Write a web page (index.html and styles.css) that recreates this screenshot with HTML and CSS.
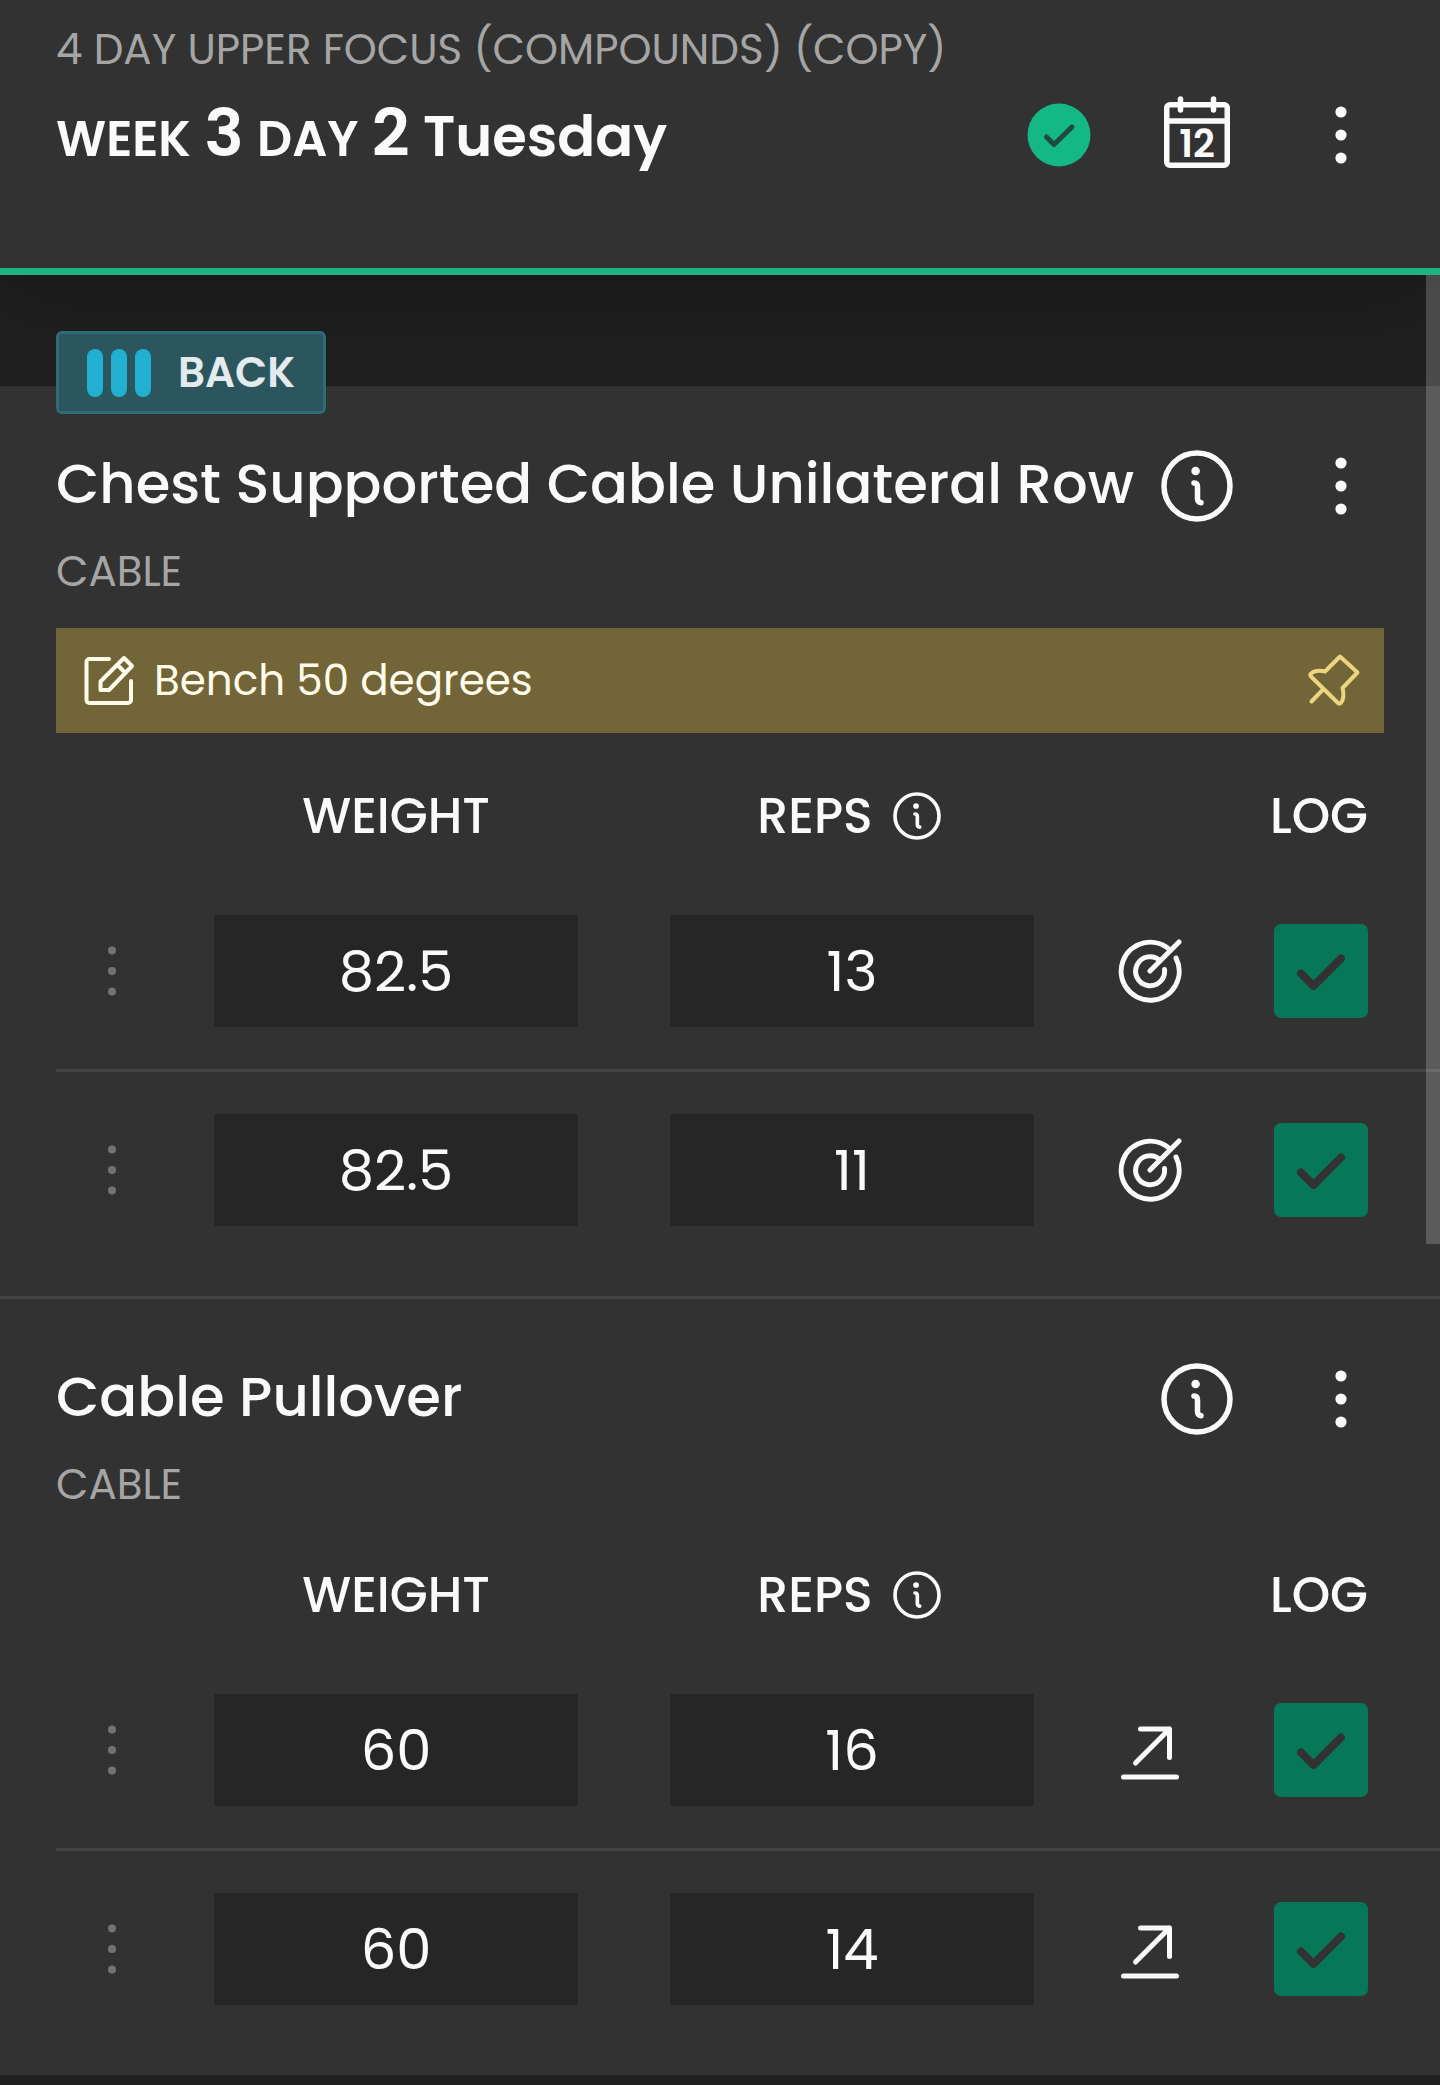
FILE: index.html
```html
<!DOCTYPE html>
<html lang="en">
<head>
<meta charset="utf-8">
<meta name="viewport" content="width=device-width, initial-scale=1">
<title>Week 3 Day 2 Tuesday</title>
<link rel="stylesheet" href="styles.css">
</head>
<body>
<svg class="sprite" aria-hidden="true">
  <symbol id="info" viewBox="0 0 72 72">
    <circle cx="36" cy="36" r="33" fill="none" stroke="currentColor" stroke-width="5.5"/>
    <circle cx="34.6" cy="21" r="4.3" fill="currentColor"/>
    <path d="M33 33c2.5 0 3.5 1.5 3.5 4v11.5c0 2.5 1 4 3.5 4.2" fill="none" stroke="currentColor" stroke-width="5.5" stroke-linecap="round"/>
  </symbol>
  <symbol id="dots" viewBox="0 0 16 72">
    <circle cx="8" cy="13" r="5.6" fill="currentColor"/><circle cx="8" cy="36" r="5.6" fill="currentColor"/><circle cx="8" cy="59" r="5.6" fill="currentColor"/>
  </symbol>
  <symbol id="grip" viewBox="0 0 16 64">
    <circle cx="8" cy="11.5" r="4" fill="currentColor"/><circle cx="8" cy="32" r="4" fill="currentColor"/><circle cx="8" cy="52.5" r="4" fill="currentColor"/>
  </symbol>
  <symbol id="target" viewBox="0 0 64 64">
    <path d="M58 19A29 29 0 1 1 52.5 11.5M46.5 30.5A14.5 14.5 0 1 1 42.2 21.8M32 32 61 3" fill="none" stroke="currentColor" stroke-width="5" stroke-linecap="round"/>
  </symbol>
  <symbol id="increase" viewBox="0 0 64 64">
    <path d="M22.5 11h29v28.5M51.5 11l-34 34M5.5 59h53" fill="none" stroke="currentColor" stroke-width="5" stroke-linecap="round" stroke-linejoin="round"/>
  </symbol>
  <symbol id="tick" viewBox="0 0 94 94">
    <path d="M27 49.5 39.5 62 67 34.5" fill="none" stroke="currentColor" stroke-width="8" stroke-linecap="round" stroke-linejoin="round"/>
  </symbol>
</svg>

<header class="topbar">
  <p class="program">4 DAY UPPER FOCUS (COMPOUNDS) (COPY)</p>
  <div class="title-row">
    <h1 class="title"><span class="unit">WEEK</span> <span class="count">3</span> <span class="unit">DAY</span> <span class="count">2</span> Tuesday</h1>
    <div class="actions">
      <svg class="done" viewBox="0 0 64 64" role="img" aria-label="Completed"><circle cx="32" cy="32" r="31.5" fill="#14b884"/><path d="M19.5 34 27 41.5 45 24" fill="none" stroke="#1f4a3c" stroke-width="5" stroke-linecap="round" stroke-linejoin="round"/></svg>
      <button class="icon-button" type="button" aria-label="Calendar">
        <svg class="icon" viewBox="0 0 72 72"><rect x="5.75" y="5.75" width="60.5" height="60.5" rx="3" fill="none" stroke="currentColor" stroke-width="5.5"/><path d="M6 22h60M19.5 0v11M52.5 0v11" fill="none" stroke="currentColor" stroke-width="5.5" stroke-linecap="round"/><text class="calendar-day" x="36" y="58" text-anchor="middle">12</text></svg>
      </button>
      <button class="menu-button" type="button" aria-label="Workout menu"><svg class="dots"><use href="#dots"/></svg></button>
    </div>
  </div>
</header>

<main class="workout">
  <div class="scroll-thumb"></div>

  <section class="exercise exercise-first">
    <div class="muscle">
      <svg class="bars" viewBox="0 0 64 48" aria-hidden="true"><rect x="0" y="0" width="16" height="48" rx="8"/><rect x="24" y="0" width="16" height="48" rx="8"/><rect x="48" y="0" width="16" height="48" rx="8"/></svg>
      BACK
    </div>
    <div class="exercise-head">
      <h2 class="exercise-name">Chest Supported Cable Unilateral Row</h2>
      <button class="icon-button" type="button" aria-label="Exercise info"><svg class="icon"><use href="#info"/></svg></button>
      <button class="menu-button" type="button" aria-label="Exercise menu"><svg class="dots"><use href="#dots"/></svg></button>
    </div>
    <p class="equipment">CABLE</p>
    <div class="note">
      <svg class="note-icon" viewBox="0 0 52 52" aria-hidden="true"><path d="M26 4H6.5a3 3 0 0 0-3 3V45a3 3 0 0 0 3 3H45a3 3 0 0 0 3-3V26M41 3 49 11 26 35H17.5V26.5ZM34.5 10 42.5 18" fill="none" stroke="currentColor" stroke-width="4" stroke-linecap="round" stroke-linejoin="round"/></svg>
      <span class="note-text">Bench 50 degrees</span>
      <button class="pin" type="button" aria-label="Unpin note"><svg class="note-icon" viewBox="0 0 52 52"><path d="M32 1.5 49.5 17.5 34.5 33Q37 42 33 48Q31 49.5 29.5 47.5L3 21.5Q1.5 20 3 18.5Q8 14.5 17 16.5ZM15 34.5 3.5 46.5" fill="none" stroke="currentColor" stroke-width="4" stroke-linecap="round" stroke-linejoin="round"/></svg></button>
    </div>
    <table class="sets sets-noted">
      <thead>
        <tr><th class="col-grip"></th><th>WEIGHT</th><th><span class="reps-label">REPS <button class="reps-info" type="button" aria-label="Reps info"><svg class="icon-small"><use href="#info"/></svg></button></span></th><th class="col-goal"></th><th class="col-log">LOG</th></tr>
      </thead>
      <tbody>
        <tr>
          <td><svg class="grip"><use href="#grip"/></svg></td>
          <td><input class="value" type="text" value="82.5" aria-label="Set 1 weight"></td>
          <td><input class="value" type="text" value="13" aria-label="Set 1 reps"></td>
          <td><svg class="goal"><use href="#target"/></svg></td>
          <td class="col-log"><label class="log"><input class="log-box" type="checkbox" checked aria-label="Log set 1"><svg class="log-tick"><use href="#tick"/></svg></label></td>
        </tr>
        <tr>
          <td><svg class="grip"><use href="#grip"/></svg></td>
          <td><input class="value" type="text" value="82.5" aria-label="Set 2 weight"></td>
          <td><input class="value" type="text" value="11" aria-label="Set 2 reps"></td>
          <td><svg class="goal"><use href="#target"/></svg></td>
          <td class="col-log"><label class="log"><input class="log-box" type="checkbox" checked aria-label="Log set 2"><svg class="log-tick"><use href="#tick"/></svg></label></td>
        </tr>
      </tbody>
    </table>
  </section>

  <section class="exercise exercise-next">
    <div class="exercise-head">
      <h2 class="exercise-name">Cable Pullover</h2>
      <button class="icon-button" type="button" aria-label="Exercise info"><svg class="icon"><use href="#info"/></svg></button>
      <button class="menu-button" type="button" aria-label="Exercise menu"><svg class="dots"><use href="#dots"/></svg></button>
    </div>
    <p class="equipment">CABLE</p>
    <table class="sets">
      <thead>
        <tr><th class="col-grip"></th><th>WEIGHT</th><th><span class="reps-label">REPS <button class="reps-info" type="button" aria-label="Reps info"><svg class="icon-small"><use href="#info"/></svg></button></span></th><th class="col-goal"></th><th class="col-log">LOG</th></tr>
      </thead>
      <tbody>
        <tr>
          <td><svg class="grip"><use href="#grip"/></svg></td>
          <td><input class="value" type="text" value="60" aria-label="Set 1 weight"></td>
          <td><input class="value" type="text" value="16" aria-label="Set 1 reps"></td>
          <td><svg class="goal"><use href="#increase"/></svg></td>
          <td class="col-log"><label class="log"><input class="log-box" type="checkbox" checked aria-label="Log set 1"><svg class="log-tick"><use href="#tick"/></svg></label></td>
        </tr>
        <tr>
          <td><svg class="grip"><use href="#grip"/></svg></td>
          <td><input class="value" type="text" value="60" aria-label="Set 2 weight"></td>
          <td><input class="value" type="text" value="14" aria-label="Set 2 reps"></td>
          <td><svg class="goal"><use href="#increase"/></svg></td>
          <td class="col-log"><label class="log"><input class="log-box" type="checkbox" checked aria-label="Log set 2"><svg class="log-tick"><use href="#tick"/></svg></label></td>
        </tr>
      </tbody>
    </table>
  </section>
</main>
</body>
</html>
```
FILE: styles.css
```css
* { box-sizing: border-box; }

body {
  margin: 0;
  background: #1f1f1f;
  color: #fafafa;
  font-family: Poppins, Inter, sans-serif;
  font-size: 42px;
}

h1, h2, p { margin: 0; }
svg { display: block; overflow: visible; }
button { border: 0; padding: 0; background: none; color: inherit; font-family: inherit; cursor: pointer; }

.sprite { position: absolute; width: 0; height: 0; }

.topbar {
  position: relative;
  padding: 20px 56px 91px;
  background: #323232;
  border-bottom: 7px solid #1cb582;
  box-shadow: 0 8px 96px rgba(0, 0, 0, 0.25);
}
.program { color: #a5a5a5; line-height: 60px; }
.title-row { display: flex; align-items: center; margin-top: 13px; }
.title { flex: 1; padding-top: 4px; font-size: 56px; font-weight: 600; line-height: 80px; }
.unit, .count { line-height: 1; }
.unit { font-size: 49px; }
.count { font-size: 66px; }
.actions { display: flex; align-items: center; gap: 64px; }
.done { width: 76px; height: 64px; }

.icon-button { width: 72px; height: 72px; flex: none; }
.icon { width: 72px; height: 72px; }
.calendar-day { font-size: 38px; font-weight: 600; fill: currentColor; }
.menu-button { width: 87px; height: 84px; display: grid; place-items: center; flex: none; }
.dots { width: 16px; height: 72px; }

.workout { position: relative; padding: 111px 0 10px; }
.scroll-thumb {
  position: absolute;
  top: 0;
  right: 0;
  width: 14px;
  height: 969px;
  background: rgba(255, 255, 255, 0.2);
}

.exercise { padding-bottom: 28px; background: #323232; }
.exercise-first { display: flow-root; }
.exercise-next { padding-top: 58px; border-top: 3px solid #454545; }

.muscle {
  position: relative;
  display: flex;
  align-items: center;
  gap: 27px;
  width: fit-content;
  height: 83px;
  margin: -55px 0 30px 56px;
  padding: 0 28px;
  border: 3px solid #2f6b78;
  border-radius: 6px;
  background: #2c565e;
  color: #e4ebee;
  font-weight: 600;
}
.bars { width: 64px; height: 48px; fill: #22b0d2; }

.exercise-head { display: flex; align-items: center; gap: 64px; padding: 0 56px; }
.exercise-name { flex: 1; margin-right: -64px; padding-bottom: 4px; font-size: 56px; font-weight: 500; line-height: 80px; }
.equipment { margin: 14px 56px 0; color: #a5a5a5; line-height: 60px; }

.note {
  display: flex;
  align-items: center;
  gap: 19px;
  height: 105px;
  margin: 26px 56px 0;
  padding: 0 24px 0 27px;
  background: #726537;
  color: #fffbea;
}
.note-text { flex: 1; }
.note-icon { width: 52px; height: 52px; }
.pin { color: #ecd57f; }

.sets {
  width: calc(100% - 56px);
  margin: 21px 0 0 56px;
  table-layout: fixed;
  border-spacing: 0;
  text-align: center;
}
.sets-noted { margin-top: 24px; }
.sets th { height: 116px; padding: 2px 0 0; font-size: 49px; font-weight: 500; }
.sets td { padding: 42px 0; }
.sets tr + tr td { border-top: 3px solid #454545; }
.sets .col-grip { width: 112px; }
.sets .col-goal { width: 139px; }
.sets .col-log { width: 221px; padding-right: 72px; text-align: right; }

.reps-label { display: flex; align-items: center; justify-content: center; gap: 20px; margin-right: 6px; }
.reps-info, .icon-small { width: 48px; height: 48px; }
.grip { width: 16px; height: 64px; margin: 0 auto; color: #737373; }
.goal { width: 64px; height: 64px; margin: 0 auto; }

.value {
  display: block;
  width: calc(100% - 92px);
  height: 112px;
  margin: 0 auto;
  padding: 0;
  border: 0;
  border-radius: 2px;
  background: #262626;
  color: inherit;
  font: inherit;
  font-size: 56px;
  text-align: center;
}

.log { display: grid; width: 94px; height: 94px; margin-left: auto; }
.log-box, .log-tick { grid-area: 1 / 1; width: 94px; height: 94px; margin: 0; }
.log-box { appearance: none; border-radius: 7px; background: #067857; }
.log-tick { color: #323232; pointer-events: none; visibility: hidden; }
.log-box:checked + .log-tick { visibility: visible; }
```
